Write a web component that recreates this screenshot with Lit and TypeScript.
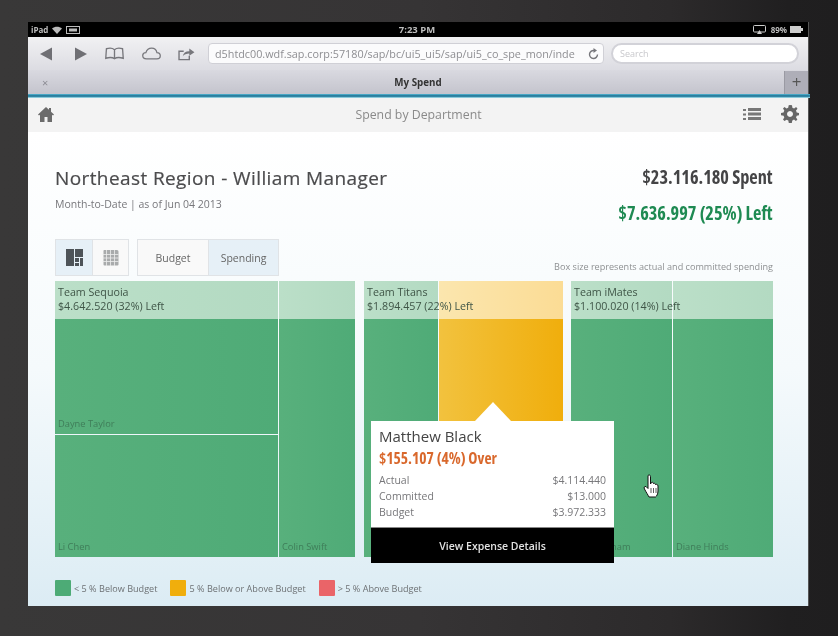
import { LitElement, html, css } from "lit";
import { customElement } from "lit/decorators.js";

@customElement("app-root")
export class AppRoot extends LitElement {
  static styles = css`
    :host {
      display: block;
      width: 838px;
      height: 636px;
      overflow: hidden;
      font-family: "Open Sans", "Noto Sans", sans-serif;
      background: linear-gradient(90deg, #393838 0%, #363435 50%, #2c2a2b 80%, #201f20 94%, #1f1e1f 100%);
    }
    * { box-sizing: border-box; }
    .stage { padding: 22px 30px 30px 28px; height: 636px; filter: blur(0.6px); }
    .device { width: 780px; height: 584px; display: flex; flex-direction: column; background: #fff; position: relative; box-shadow: 1px 0 0 #555; }
    .status { height: 15px; background: #000; color: #bdbdbd; font-size: 8px; font-weight: 700; display: grid; grid-template-columns: 1fr auto 1fr; align-items: center; padding: 0 5px 0 3px; flex: none; }
    .status .time { font-size: 9.5px; }
    .status .l { display: flex; align-items: center; gap: 4px; }
    .status .r { display: flex; align-items: center; gap: 3px; justify-content: flex-end; }
    .pct { margin-left: 2px; }
    .toolbar { height: 33px; flex: none; background: linear-gradient(#f1f1f3, #dcdce2); display: flex; align-items: center; padding: 0 9px 0 12px; }
    .nav { display: flex; align-items: center; width: 168px; flex: none; }
    .nav svg { display: block; flex: none; }
    .g1 { margin-left: 23px; }
    .g2 { margin-left: 18px; }
    .g3 { margin-left: 18px; }
    .g4 { margin-left: 17px; }
    .url { width: 396px; height: 21px; flex: none; border-radius: 4px; background: #fbfbfc; border: 1px solid #d0d0d6; color: #8e8e92; font-size: 10.8px; padding: 0 4px 0 6px; display: flex; align-items: center; justify-content: space-between; white-space: nowrap; }
    .search { width: 188px; height: 21px; margin-left: 7px; flex: none; border-radius: 11px; background: #fff; border: 2px solid #d2d2d8; color: #c8c8cc; font-size: 9px; padding: 0 7px; display: flex; align-items: center; }
    .tabs { height: 24px; flex: none; background: linear-gradient(#d9d9e0, #c4c4cd); display: grid; grid-template-columns: 1fr auto 1fr; align-items: center; color: #333; font-size: 9.8px; font-weight: 700; }
    .close { padding-left: 14px; color: #8c8c94; font-weight: 400; font-size: 11px; }
    .plus { justify-self: end; width: 24px; height: 23px; background: #aeaeb8; color: #555; font-size: 17px; font-weight: 400; line-height: 22px; text-align: center; margin-top: 1px; border-left: 1px solid #9a9aa3; }
    .rule { height: 4px; flex: none; background: linear-gradient(#58bbd8 0, #2a7f9f 35%, #2a7f9f 60%, #b7ecf5 100%); width: 782px; }
    .apphead { height: 34px; flex: none; background: #f3f3f3; display: grid; grid-template-columns: 1fr auto 1fr; align-items: center; padding: 0 9px 2px 10px; color: #8a8a8a; font-size: 12.3px; }
    .apphead svg { display: block; }
    .apphead .icons { display: flex; align-items: center; gap: 20px; justify-content: flex-end; }
    .main { flex: 1; background: linear-gradient(#ffffff 0%, #f5fafc 50%, #dcecf4 100%); padding: 33px 35px 0 27px; display: flex; flex-direction: column; }
    .top { display: flex; justify-content: space-between; height: 75px; flex: none; }
    h1 { margin: 0; font-size: 19px; line-height: 26px; font-weight: 400; color: #4b4b4d; letter-spacing: .4px; -webkit-text-stroke: .2px #4b4b4d; }
    .sub { font-size: 10.5px; color: #77777b; margin-top: 6px; line-height: 14px; }
    .tot { text-align: right; font-weight: 700; font-size: 20px; font-stretch: condensed; line-height: 26px; margin-top: -1px; }
    .tot div { transform: scaleX(.915); transform-origin: right center; white-space: nowrap; }
    .spent { color: #444446; }
    .left { color: #1e8a52; margin-top: 10px; }
    .controls { height: 41px; flex: none; display: flex; align-items: flex-start; justify-content: space-between; }
    .seg { display: flex; gap: 8px; height: 37px; margin-top: -1px; }
    .group { display: flex; border: 1px solid #e0e3e6; }
    .btn { display: flex; align-items: center; justify-content: center; font-size: 10.5px; color: #666; background: #f9f9f9; }
    .btn + .btn { border-left: 1px solid #e0e3e6; }
    .btn.on { background: #e6f0f7; }
    .ic { width: 36px; }
    .tx { width: 70px; }
    .note { font-size: 9.1px; color: #8e9092; align-self: flex-end; margin-bottom: 8px; }
    .map { display: grid; grid-template-columns: 309px 207px 202px; height: 276px; flex: none; }
    .team { position: relative; display: grid; grid-template-rows: 38px 1fr; color: #3e4f44; }
    .t1 { grid-template-columns: 223px 76px; column-gap: 1px; padding-right: 9px; }
    .t2 { grid-template-columns: 74px 124px; column-gap: 1px; padding-right: 8px; }
    .t3 { grid-template-columns: 101px 100px; column-gap: 1px; }
    .hd { background: linear-gradient(90deg, #bbdfc8, #b3dac2); }
    .hd.amber { background: linear-gradient(90deg, #fbe6ae, #fbdc95); }
    .hdtext { position: absolute; left: 3px; top: 4px; font-size: 10.7px; line-height: 14px; white-space: nowrap; color: #3f5547; }
    .col { display: grid; gap: 1px; min-height: 0; }
    .split { grid-template-rows: 115px 1fr; }
    .cell { background: linear-gradient(90deg, #58b07c, #4fab77); display: flex; align-items: flex-end; padding: 0 3px 4px; font-size: 9.3px; line-height: 12px; color: #3f7d59; white-space: nowrap; overflow: hidden; }
    .cell.amber { background: linear-gradient(90deg, #f2c23e, #f0ae0c); }
    .legend { display: flex; align-items: center; gap: 13px; margin-top: 23px; font-size: 9.1px; color: #6d7174; }
    .li { display: flex; align-items: center; gap: 3px; }
    .sw { width: 16px; height: 16px; border-radius: 1px; }
    .sw.g { background: #4dab76; }
    .sw.a { background: #f0ae0c; }
    .sw.r { background: #ea6468; }
    .pop { position: absolute; left: 343px; top: 399px; width: 243px; height: 142px; background: #fff; display: flex; flex-direction: column; }
    .arrow { position: absolute; left: 104px; top: -19px; width: 0; height: 0; border-left: 18px solid transparent; border-right: 18px solid transparent; border-bottom: 19px solid #fff; }
    .pbody { flex: 1; padding: 5px 8px 0; }
    .pname { font-size: 15px; line-height: 20px; color: #444; margin-bottom: 2px; }
    .pover { font-size: 15.5px; font-stretch: condensed; line-height: 20px; font-weight: 700; color: #d9682c; white-space: nowrap; margin-bottom: 4px; }
    .row { display: flex; justify-content: space-between; font-size: 10.5px; line-height: 16px; color: #77777a; }
    .pfoot { height: 36px; background: #000; color: #e2e2e2; font-size: 10.5px; font-weight: 600; display: flex; align-items: center; justify-content: center; border-top: 1px solid #888; }
    .cursor { position: absolute; left: 615px; top: 452px; width: 18px; height: 24px; }
  `;

  private cell(name: string, amber = false) {
    return html`<div class="cell ${amber ? "amber" : ""}">${name}</div>`;
  }

  render() {
    return html`
      <div class="stage">
        <div class="device">
          <div class="status">
            <div class="l">
              <span>iPad</span>
              <svg width="10" height="8" viewBox="0 0 10 8"><path d="M0 2.6C2.8 0 7.2 0 10 2.6L5 8Z" fill="#bbb"/></svg>
              <svg width="14" height="8" viewBox="0 0 14 8"><rect x=".5" y=".5" width="13" height="7" fill="none" stroke="#bbb"/><rect x="3" y="2.5" width="8" height="3" fill="#bbb"/></svg>
            </div>
            <div class="time">7:23 PM</div>
            <div class="r">
              <svg width="13" height="9" viewBox="0 0 13 9"><rect x=".5" y=".5" width="12" height="6.5" rx="1" fill="none" stroke="#ccc"/><path d="M4 9l2.5-4L9 9Z" fill="#ccc"/></svg>
              <span class="pct">89%</span>
              <svg width="13" height="7" viewBox="0 0 13 7"><rect width="11" height="7" fill="#ccc"/><rect x="11" y="2" width="2" height="3" fill="#ccc"/></svg>
            </div>
          </div>
          <div class="toolbar">
            <div class="nav">
              <svg width="12" height="14" viewBox="0 0 13 14"><path d="M13 0V14L0 7Z" fill="#6f6f74"/></svg>
              <svg class="g1" width="12" height="14" viewBox="0 0 13 14"><path d="M0 0V14L13 7Z" fill="#6f6f74"/></svg>
              <svg class="g2" width="19" height="13" viewBox="0 0 20 13"><path d="M10 2.5C8 .8 4 .8 1.5 1.5L.8 11.5C4 10.5 8 10.5 10 12C12 10.5 16 10.5 19.2 11.5L18.5 1.5C16 .8 12 .8 10 2.5ZM10 2.5V12" fill="none" stroke="#77777c" stroke-width="1.4"/></svg>
              <svg class="g3" width="19" height="13" viewBox="0 0 21 14"><path d="M5 13C2 13 .8 11 .8 9.3C.8 7.3 2.5 6 4.3 6C5.2 3 7.8 1 10.7 1C14 1 16 3.5 16.5 6C18.7 6 20.2 7.6 20.2 9.5C20.2 11.5 18.7 13 16.5 13Z" fill="none" stroke="#77777c" stroke-width="1.4"/></svg>
              <svg class="g4" width="17" height="14" viewBox="0 0 18 15"><path d="M12 9.5V13.5H1V4.5H6" fill="none" stroke="#77777c" stroke-width="1.5"/><path d="M5 10C5.5 6.5 8 4.5 12 4.5V1.5L17.5 5.5L12 9.5V7C9 7 6.5 8 5 10Z" fill="#77777c"/></svg>
            </div>
            <div class="url"><span>d5htdc00.wdf.sap.corp:57180/sap/bc/ui5_ui5/sap/ui5_co_spe_mon/inde</span>
              <svg width="11" height="12" viewBox="0 0 11 12"><path d="M9.5 6.5A4 4 0 1 1 6 2.5" fill="none" stroke="#77777c" stroke-width="1.4"/><path d="M5.5 0L9 2.5L5.5 5Z" fill="#77777c"/></svg>
            </div>
            <div class="search">Search</div>
          </div>
          <div class="tabs">
            <div class="close">×</div>
            <div>My Spend</div>
            <div class="plus">+</div>
          </div>
          <div class="rule"></div>
          <div class="apphead">
            <svg width="16" height="17" viewBox="0 0 16 17"><path d="M8 1L0 8.5L1 9.5L2 8.7V16H6.5V11H9.5V16H14V8.7L15 9.5L16 8.5L13 5.7V2H11V3.8Z" fill="#6b6b6b"/></svg>
            <div>Spend by Department</div>
            <div class="icons">
              <svg width="18" height="13" viewBox="0 0 18 13"><path d="M0 1h3v2H0zM0 5.5h3v2H0zM0 10h3v2H0zM5 0h13v3H5zM5 4.5h13v3H5zM5 9h13v3H5z" fill="#777"/></svg>
              <svg width="18" height="18" viewBox="0 0 18 18"><path d="M9 0L11 .3L11.4 2.7L13.1 3.4L15.1 2L16.5 3.7L15 5.6L15.7 7.4L18 8V10.2L15.7 10.7L15 12.5L16.4 14.4L14.9 16L13 14.6L11.3 15.4L10.8 18H7.8L7.3 15.4L5.5 14.7L3.5 16L2 14.5L3.3 12.5L2.6 10.8L0 10.2V7.9L2.5 7.4L3.3 5.6L2 3.6L3.5 2.1L5.5 3.4L7.2 2.7L7.7 .2Z M9 6a3 3 0 1 0 .01 0Z" fill="#666" fill-rule="evenodd"/></svg>
            </div>
          </div>
          <div class="main">
            <div class="top">
              <div>
                <h1>Northeast Region - William Manager</h1>
                <div class="sub">Month-to-Date | as of Jun 04 2013</div>
              </div>
              <div class="tot">
                <div class="spent">$23.116.180 Spent</div>
                <div class="left">$7.636.997 (25%) Left</div>
              </div>
            </div>
            <div class="controls">
              <div class="seg">
                <div class="group">
                  <div class="btn ic on">
                    <svg width="17" height="17" viewBox="0 0 17 17"><path d="M0 0h8v17H0zM9 0h8v8H9zM9 9h4v4H9zM14 9h3v8h-3zM9 14h4v3H9z" fill="#4d5358"/></svg>
                  </div>
                  <div class="btn ic">
                    <svg width="17" height="17" viewBox="0 0 17 17"><path d="M2 1h13a1.5 1.5 0 0 1 1.5 1.5v13a1 1 0 0 1-1 1h-13a1 1 0 0 1-1-1v-13A1.5 1.5 0 0 1 2 1Z" fill="#a9abac"/><path d="M.5 5.5h16M.5 9h16M.5 12.5h16M4.5 1v16M8.5 1v16M12.5 1v16" stroke="#eee" stroke-width=".8"/></svg>
                  </div>
                </div>
                <div class="group">
                  <div class="btn tx">Budget</div>
                  <div class="btn tx on">Spending</div>
                </div>
              </div>
              <div class="note">Box size represents actual and committed spending</div>
            </div>
            <div class="map">
              <div class="team t1">
                <div class="hd"></div><div class="hd"></div>
                <div class="col split">${this.cell("Dayne Taylor")}${this.cell("Li Chen")}</div>
                <div class="col">${this.cell("Colin Swift")}</div>
                <div class="hdtext">Team Sequoia<br />$4.642.520 (32%) Left</div>
              </div>
              <div class="team t2">
                <div class="hd"></div><div class="hd amber"></div>
                <div class="col">${this.cell("")}</div>
                <div class="col">${this.cell("", true)}</div>
                <div class="hdtext">Team Titans<br />$1.894.457 (22%) Left</div>
              </div>
              <div class="team t3">
                <div class="hd"></div><div class="hd"></div>
                <div class="col">${this.cell("Sam Graham")}</div>
                <div class="col">${this.cell("Diane Hinds")}</div>
                <div class="hdtext">Team iMates<br />$1.100.020 (14%) Left</div>
              </div>
            </div>
            <div class="legend">
              <div class="li"><div class="sw g"></div>&lt; 5 % Below Budget</div>
              <div class="li"><div class="sw a"></div>5 % Below or Above Budget</div>
              <div class="li"><div class="sw r"></div>&gt; 5 % Above Budget</div>
            </div>
          </div>
          <div class="pop">
            <div class="arrow"></div>
            <div class="pbody">
              <div class="pname">Matthew Black</div>
              <div class="pover">$155.107 (4%) Over</div>
              <div class="row"><span>Actual</span><span>$4.114.440</span></div>
              <div class="row"><span>Committed</span><span>$13.000</span></div>
              <div class="row"><span>Budget</span><span>$3.972.333</span></div>
            </div>
            <div class="pfoot">View Expense Details</div>
          </div>
          <svg class="cursor" viewBox="0 0 18 24"><path d="M5 1.5C6 .5 7.5 1 7.5 2.5V10L8.5 8.5C9.5 8 10.5 8.5 10.5 9.5C11.5 9 12.5 9.5 12.5 10.5C13.5 10 15 10.5 15 12V17C15 20 13.5 22.5 12.5 23H6C5 21 3 18 1.5 15C.5 13.5 1.5 12 3 12.5L5 14.5Z" fill="#fff" stroke="#111" stroke-width="1"/><path d="M8 14v5M10.5 14v5M13 14v5" stroke="#333" stroke-width=".8"/></svg>
        </div>
      </div>
    `;
  }
}
